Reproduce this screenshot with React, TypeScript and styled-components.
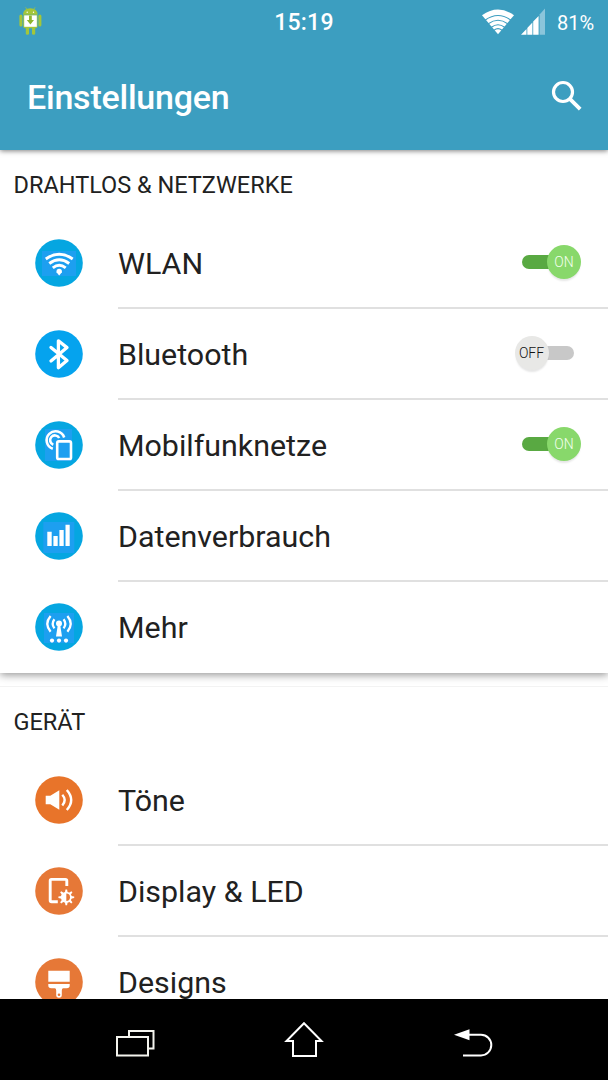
import React from 'react';
import styled, { createGlobalStyle } from 'styled-components';

const GlobalStyle = createGlobalStyle`
  * { box-sizing: border-box; }
  body {
    margin: 0;
    background: #fff;
    font-family: Roboto, "Noto Sans", sans-serif;
    color: #212121;
    overflow: hidden;
  }
  svg { display: block; flex: none; }
`;

const Screen = styled.div`
  width: 608px;
  height: 1080px;
  display: flex;
  flex-direction: column;
  overflow: hidden;
  background: #fff;
`;

const Header = styled.header`
  flex: none;
  height: 150px;
  background: #3c9ec0;
  color: #fff;
  box-shadow: 0 1px 5px rgba(0, 0, 0, 0.5);
  z-index: 1;
`;

const StatusBar = styled.div`
  height: 44px;
  padding: 0 13px 0 17px;
  display: grid;
  grid-template-columns: 1fr auto 1fr;
  align-items: center;
`;

const Clock = styled.span`
  font-size: 23px;
  font-weight: 500;
  line-height: 42px;
  padding: 2px 4px 0 0;
  letter-spacing: 0.2px;
`;

const StatusIcons = styled.div`
  display: flex;
  justify-content: flex-end;
  align-items: center;
`;

const Battery = styled.span`
  width: 38px;
  margin-left: 11px;
  padding-top: 1px;
  font-size: 20px;
  line-height: 42px;
  white-space: nowrap;
`;

const TitleBar = styled.div`
  height: 106px;
  padding: 0 25px 0 27px;
  display: flex;
  align-items: center;
  justify-content: space-between;
`;

const Title = styled.h1`
  margin: 0;
  font-size: 34px;
  font-weight: 500;
  line-height: 106px;
  letter-spacing: -0.23px;
`;

const SearchIcon = styled.svg`
  margin-bottom: 2px;
`;

const Content = styled.main`
  flex: 1;
  min-height: 0;
  overflow: hidden;
`;

const Section = styled.section<{ $separated?: boolean }>`
  height: 523px;
  background: #fff;
  box-shadow: ${(p) => (p.$separated ? '0 0 0 1px #f3f3f3' : '0 2px 8px rgba(0,0,0,.42)')};
  margin-top: ${(p) => (p.$separated ? '14px' : '0')};
`;

const SectionTitle = styled.h2`
  margin: 0;
  height: 68px;
  padding-left: 13.5px;
  font-size: 23.5px;
  font-weight: 400;
  line-height: 71px;
`;

const Row = styled.div`
  height: 91px;
  padding-left: 35px;
  display: flex;
  align-items: center;
`;

const RowBody = styled.div<{ $last?: boolean }>`
  flex: 1;
  height: 91px;
  margin-left: 35px;
  padding-right: 27px;
  display: flex;
  align-items: center;
  justify-content: space-between;
  border-bottom: 2px solid ${(p) => (p.$last ? 'transparent' : '#e0e0e0')};
`;

const Label = styled.span`
  font-size: 30.4px;
  line-height: 40px;
  padding-top: 2px;
`;

const Switch = styled.div<{ $on: boolean }>`
  width: 59px;
  height: 34px;
  margin: 0 ${(p) => (p.$on ? '0' : '7.5px')} 1px 0;
  display: flex;
  align-items: center;
  flex-direction: ${(p) => (p.$on ? 'row' : 'row-reverse')};
`;

const Track = styled.div<{ $on: boolean }>`
  width: 38px;
  height: 14px;
  border-radius: 7px;
  background: ${(p) => (p.$on ? '#59a942' : '#c8c8c8')};
`;

const Thumb = styled.div<{ $on: boolean }>`
  width: 34px;
  height: 34px;
  flex: none;
  border-radius: 50%;
  margin: ${(p) => (p.$on ? '0 0 0 -13px' : '0 -13px 0 0')};
  background: ${(p) => (p.$on ? '#88d86b' : '#e8e8e6')};
  color: ${(p) => (p.$on ? '#f4fff0' : '#111')};
  box-shadow: 0 3px 2px -1px rgba(0, 0, 0, 0.1);
  font-size: 14px;
  font-weight: 300;
  line-height: 34px;
  text-align: center;
  z-index: 1;
`;

const NavBar = styled.nav`
  flex: none;
  height: 81px;
  background: #000;
  display: flex;
  justify-content: space-between;
  align-items: center;
  padding: 0 114px;
`;

const NavGlyph = styled.svg<{ $drop?: number }>`
  margin-top: ${(p) => p.$drop ?? 0}px;
`;

const Disc = styled.svg`
  margin-bottom: 1px;
`;

type Kind = 'wifi' | 'bluetooth' | 'mobile' | 'data' | 'more' | 'sound' | 'display' | 'design';

const ray = (a: number) => `rotate(${a} 31.3 30.3)`;

const glyphs: Record<Kind, React.ReactNode> = {
  wifi: (
    <>
      <rect x="7" y="12" width="34" height="25" fill="#1d9ff0" />
      <g fill="none" stroke="#fff" strokeWidth="2.9">
        <path d="M10.8 20Q24.2 10.6 37.7 20" />
        <path d="M14.3 24.5Q24.2 17 34.2 24.5" />
        <path d="M17.8 28.8Q24.2 23.6 30.7 28.8" />
      </g>
      <path d="M21.5 33.2a2.8 2.8 0 1 1 5.4 0L24.2 36.4z" fill="#fff" />
    </>
  ),
  bluetooth: (
    <path d="M16 17.4L32 30.6L23.4 37.8V10.8L32 17.6L16 31" fill="none" stroke="#fff" strokeWidth="3.3" strokeLinejoin="round" strokeLinecap="round" />
  ),
  mobile: (
    <>
      <rect x="10" y="8" width="27" height="32" fill="#1d9ff0" />
      <g fill="none" stroke="#fff" strokeWidth="2.6">
        <rect x="22.2" y="20.4" width="13.8" height="17.6" rx="1.6" />
        <path d="M29.2 16.5A9 9 0 1 0 17.8 27.8" />
        <path d="M24.2 17A4.8 4.8 0 1 0 18.3 23.7" />
      </g>
    </>
  ),
  data: (
    <>
      <rect x="8.3" y="10" width="31" height="31" fill="#1d9ff0" />
      <path d="M12.3 19.8h4.4V34h-4.4zM18.4 24h4.3v10h-4.3zM24.4 18h4.3v16h-4.3zM30.5 12.7h4.2V34h-4.2z" fill="#fff" />
    </>
  ),
  more: (
    <>
      <rect x="9" y="10" width="30" height="30" fill="#1d9ff0" />
      <g fill="#fff">
        <circle cx="24" cy="20.6" r="3" />
        <path d="M22.8 22h2.4l1.8 11.4h-6z" />
        <circle cx="17" cy="37.6" r="2.1" />
        <circle cx="24" cy="37.6" r="2.1" />
        <circle cx="31" cy="37.6" r="2.1" />
      </g>
      <g fill="none" stroke="#fff" strokeWidth="2.3">
        <path d="M19.4 16.2Q16 20.8 19.4 25.4M28.6 16.2Q32 20.8 28.6 25.4" />
        <path d="M15.6 13Q9 20.8 15.6 28.7M32.4 13Q39 20.8 32.4 28.7" />
      </g>
    </>
  ),
  sound: (
    <>
      <path d="M10.7 19.7h4.6l9-5.4v19.4l-9-5.4h-4.6z" fill="#fff" />
      <g fill="none" stroke="#fff" strokeWidth="2.4">
        <path d="M27.3 18.7Q32.1 24 27.3 29.5M31.8 14Q40.6 24 31.8 34" />
      </g>
    </>
  ),
  display: (
    <>
      <path d="M31.8 18.9V13.7Q31.8 12.4 30.4 12.4H16.4Q15.2 12.4 15.2 13.8V33.6Q15.2 34.8 16.6 34.8H22.8" fill="none" stroke="#fff" strokeWidth="2.9" />
      {[0, 45, 90, 135, 180, 225, 270, 315].map((a) => (
        <path key={a} d="M29.9 25.6L30.5 22.4H32.1L32.7 25.6z" fill="#fff" transform={ray(a)} />
      ))}
      <circle cx="31.3" cy="30.3" r="5.5" fill="#fff" />
      <path d="M31.3 26.6A3.7 3.7 0 0 1 31.3 34z" fill="#e67837" />
    </>
  ),
  design: (
    <>
      <path d="M13.3 12.7h21.4v11H13.3zM13.3 26h21.4v1.5q0 2.7-3 2.7h-3.4q-1.5 0-1.5 2.3V37a2.8 2.8 0 0 1-5.6 0v-4.5q0-2.3-1.5-2.3h-3.4q-3 0-3-2.7z" fill="#fff" />
      <circle cx="24" cy="36.8" r="1.3" fill="#e67837" />
    </>
  ),
};

const discColors: Record<Kind, string> = {
  wifi: '#05a6e1',
  bluetooth: '#05a3ee',
  mobile: '#05a6e1',
  data: '#05a6e1',
  more: '#05a6e1',
  sound: '#e8742a',
  display: '#e67837',
  design: '#e67837',
};

const RowIcon = ({ kind }: { kind: Kind }) => (
  <Disc width="48" height="48" viewBox="0 0 48 48">
    <circle cx="24" cy="24" r="23.8" fill={discColors[kind]} />
    {glyphs[kind]}
  </Disc>
);

const AndroidIcon = () => (
  <svg width="28" height="30" viewBox="0 0 28 30">
    <g fill="#a4c639">
      <path d="M6 7.8Q6.2 1.2 13.3 1.2T20.7 7.8z" />
      <path d="M8.5.2l2 3M18.2.2l-2 3" stroke="#a4c639" strokeWidth=".7" />
      <rect x="2.4" y="7.5" width="3" height="12" rx="1.5" />
      <rect x="21.4" y="7.5" width="3" height="12" rx="1.5" />
      <path d="M6.3 8.2h14.2v11.4q0 1.6-1.6 1.6H8q-1.7 0-1.7-1.6z" />
      <rect x="8.8" y="19" width="3.2" height="8.8" rx="1.5" />
      <rect x="15" y="19" width="3.2" height="8.8" rx="1.5" />
    </g>
    <rect x="7.2" y="8.4" width="12.6" height="11.4" fill="#fff" />
    <path d="M12 8.4h2.8v4.6h2.2L13.4 17.4l-3.6-4.4H12z" fill="#8fb52d" />
    <circle cx="10.2" cy="5.2" r=".7" fill="#fff" />
    <circle cx="16.5" cy="5.2" r=".7" fill="#fff" />
  </svg>
);

const StatusWifi = () => (
  <svg width="34" height="28" viewBox="0 0 34 28">
    <path d="M1 7.2Q17 -4.4 33 7.2L17 26.2z" fill="#fff" />
    <g fill="none" stroke="#3c9ec0" strokeWidth="1.1">
      <path d="M4 12.2Q17 2.8 30 12.2M7.3 15.8Q17 8.8 26.7 15.8M10.4 19.2Q17 14.4 23.6 19.2M13 22.2Q17 19 21 22.2" />
    </g>
  </svg>
);

const Signal = () => (
  <svg width="25" height="28" viewBox="0 0 25 28">
    <path d="M0 26.8L5.5 21V26.8zM6.3 20L11.4 14.6V26.8H6.3zM12.2 13.6L17.6 7.9V26.8H12.2z" fill="#fff" />
    <path d="M18.6 6.4L24 .4V26.8h-5.4z" fill="#8bc5db" />
  </svg>
);

const StatusGlyphs = styled.div`
  display: flex;
  gap: 6px;
`;

interface Item {
  kind: Kind;
  label: string;
  on?: boolean;
}

const wireless: Item[] = [
  { kind: 'wifi', label: 'WLAN', on: true },
  { kind: 'bluetooth', label: 'Bluetooth', on: false },
  { kind: 'mobile', label: 'Mobilfunknetze', on: true },
  { kind: 'data', label: 'Datenverbrauch' },
  { kind: 'more', label: 'Mehr' },
];

const device: Item[] = [
  { kind: 'sound', label: 'Töne' },
  { kind: 'display', label: 'Display & LED' },
  { kind: 'design', label: 'Designs' },
];

const Rows = ({ items }: { items: Item[] }) => (
  <>
    {items.map((item, i) => (
      <Row key={item.kind}>
        <RowIcon kind={item.kind} />
        <RowBody $last={i === items.length - 1}>
          <Label>{item.label}</Label>
          {item.on !== undefined && (
            <Switch $on={item.on}>
              <Track $on={item.on} />
              <Thumb $on={item.on}>{item.on ? 'ON' : 'OFF'}</Thumb>
            </Switch>
          )}
        </RowBody>
      </Row>
    ))}
  </>
);

export default function App() {
  return (
    <Screen>
      <GlobalStyle />
      <Header>
        <StatusBar>
          <AndroidIcon />
          <Clock>15:19</Clock>
          <StatusIcons>
            <StatusGlyphs>
              <StatusWifi />
              <Signal />
            </StatusGlyphs>
            <Battery>81%</Battery>
          </StatusIcons>
        </StatusBar>
        <TitleBar>
          <Title>Einstellungen</Title>
          <SearchIcon width="32" height="32" viewBox="0 0 32 32" fill="none" stroke="#fff">
            <circle cx="12" cy="12" r="9.5" strokeWidth="3.2" />
            <path d="M18.8 18.8L29.2 29.2" strokeWidth="3.8" />
          </SearchIcon>
        </TitleBar>
      </Header>
      <Content>
        <Section>
          <SectionTitle>DRAHTLOS &amp; NETZWERKE</SectionTitle>
          <Rows items={wireless} />
        </Section>
        <Section $separated>
          <SectionTitle>GERÄT</SectionTitle>
          <Rows items={device} />
        </Section>
      </Content>
      <NavBar>
        <NavGlyph $drop={6} width="42" height="32" viewBox="0 0 42 32" fill="none" stroke="#f4f4ee" strokeWidth="2">
          <path d="M15 9V4H39.5V21.5H35" />
          <rect x="3" y="10" width="31" height="18.5" />
        </NavGlyph>
        <NavGlyph width="42" height="40" viewBox="0 0 42 40" fill="none" stroke="#fff" strokeWidth="2">
          <path d="M21 3.2L38.5 21H33V36H10V21H3.5z" />
        </NavGlyph>
        <NavGlyph $drop={6} width="42" height="32" viewBox="0 0 42 32">
          <path d="M14 7.8H29a10.3 10.3 0 0 1 0 20.6H11" fill="none" stroke="#fff" strokeWidth="2" />
          <path d="M2 7.8L17.5 2.3v11z" fill="#fff" />
        </NavGlyph>
      </NavBar>
    </Screen>
  );
}
